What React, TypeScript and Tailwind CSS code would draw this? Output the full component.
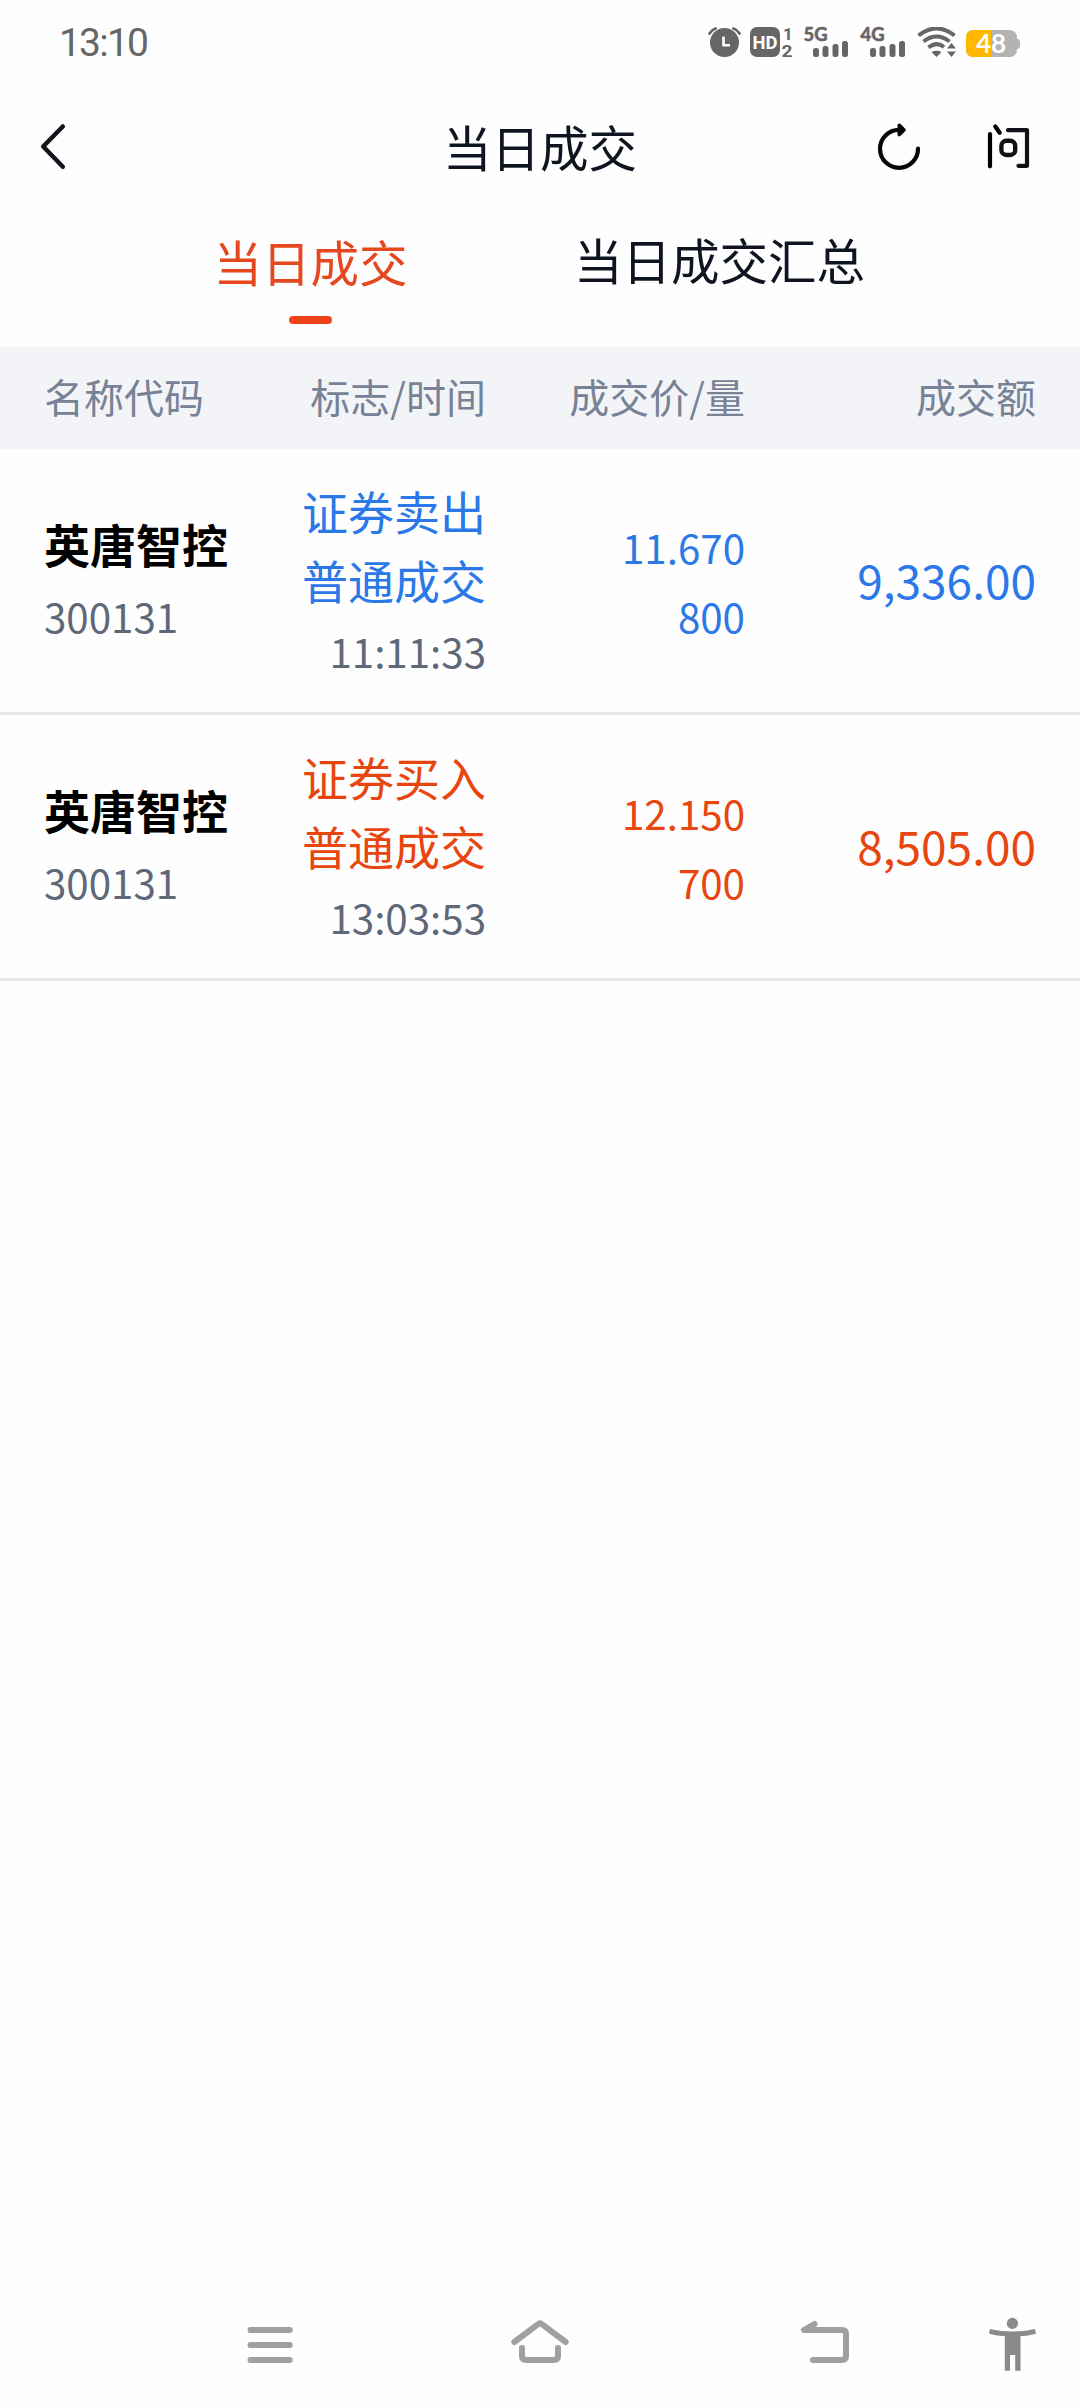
import React from "react";

type Trade = {
  name: string;
  code: string;
  action: string;
  kind: string;
  time: string;
  price: string;
  volume: string;
  amount: string;
  side: "buy" | "sell";
};

const trades: Trade[] = [
  {
    name: "英唐智控",
    code: "300131",
    action: "证券卖出",
    kind: "普通成交",
    time: "11:11:33",
    price: "11.670",
    volume: "800",
    amount: "9,336.00",
    side: "sell",
  },
  {
    name: "英唐智控",
    code: "300131",
    action: "证券买入",
    kind: "普通成交",
    time: "13:03:53",
    price: "12.150",
    volume: "700",
    amount: "8,505.00",
    side: "buy",
  },
];

const sideColor = { buy: "text-[#e8450f]", sell: "text-[#2b78e8]" };

function Signal({ label }: { label: string }) {
  return (
    <svg className="overflow-visible" width="45" height="30" viewBox="0 0 45 30" fill="#666">
      <text x="-0.5" y="14" fontSize="19.5" fontWeight="700" fontFamily="Lato" textLength="24" lengthAdjust="spacingAndGlyphs" stroke="#666" strokeWidth="0.6">
        {label}
      </text>
      <rect x="9" y="21" width="6" height="9" rx="2.5" />
      <rect x="18.5" y="19" width="6" height="11" rx="2.5" />
      <rect x="28.5" y="17" width="6" height="13" rx="2.5" />
      <rect x="38" y="14" width="6" height="16" rx="2.5" />
    </svg>
  );
}

function StatusBar() {
  return (
    <div className="flex h-[86px] items-start justify-between pr-[60px] pl-[59px] text-[#666]">
      <span className="mt-[21px] font-['Roboto',sans-serif] text-[39px] leading-[44px] tracking-[-1.800px]">13:10</span>
      <div className="mt-[27px] flex items-start">
        <svg className="mr-[9px]" width="33" height="30" viewBox="0 0 33 30" fill="none">
          <circle cx="16.5" cy="15.5" r="14.5" fill="#666" />
          <path d="M1.5 6.5Q3.5 3 7.5 1.5M31.5 6.5Q29.500 3 25.500 1.500" stroke="#666" strokeWidth="2.8" strokeLinecap="round" />
          <path d="M15.500 9.500V18.300H22" stroke="#fff" strokeWidth="2.600" />
        </svg>
        <svg className="mr-[11px] overflow-visible" width="43" height="30" viewBox="0 0 43 30" fill="#666">
          <rect width="30" height="30" rx="7" />
          <text x="2.500" y="21.500" fontSize="18.500" fontWeight="700" fill="#fff" fontFamily="Roboto" textLength="25" lengthAdjust="spacingAndGlyphs">HD</text>
          <text x="33" y="12.500" fontSize="17" fontWeight="700" fontFamily="Roboto">1</text>
          <text x="31.500" y="30" fontSize="17" fontWeight="700" fontFamily="Roboto" textLength="11" lengthAdjust="spacingAndGlyphs">2</text>
        </svg>
        <div className="mr-[12px]"><Signal label="5G" /></div>
        <div className="mr-[11px]"><Signal label="4G" /></div>
        <svg className="mr-[9px]" width="40" height="30" viewBox="0 0 40 30" fill="none" stroke="#666">
          <path d="M1.500 8.500Q19.500 -5.500 37.500 8.500" strokeWidth="4" />
          <path d="M6.500 14.500Q19.500 4.500 32.500 14.500" strokeWidth="4" />
          <path d="M11.500 20.500Q19.500 14 27 20" strokeWidth="4" />
          <path d="M14.500 25Q19.500 22.500 24.500 25L19.500 30Z" fill="#666" stroke="none" />
          <path d="M30 21.500L34.500 16L39 21.500ZM30 24.500L34.500 30L39 24.500Z" fill="#666" stroke="none" />
        </svg>
        <div className="relative mt-[3px] flex h-[27px] w-[54px] items-center">
          <div className="flex h-[27px] w-[51px] overflow-hidden rounded-[7px] bg-[#b3b3b3]">
            <div className="w-[25px] bg-[#ffb700]" />
          </div>
          <div className="h-[10px] w-[3px] rounded-r-[3px] bg-[#b3b3b3]" />
          <span className="absolute inset-y-0 left-0 w-[50px] text-center font-['Lato',sans-serif] text-[26px] leading-[27px] font-bold text-white">48</span>
        </div>
      </div>
    </div>
  );
}

function TitleBar() {
  return (
    <header className="grid h-[120px] grid-cols-3 items-center">
      <svg className="ml-[40px]" width="28" height="48" viewBox="0 0 28 48" fill="none" stroke="#11151c" strokeWidth="4.500" strokeLinecap="round" strokeLinejoin="round">
        <path d="M22.800 4.500L3.200 24.500L22.800 44.800" />
      </svg>
      <h1 className="text-center text-[48.500px] leading-[72px] text-[#0e1420]">当日成交</h1>
      <div className="flex justify-end gap-[66px] pr-[50px]">
        <svg width="44" height="50" viewBox="877 121 44 50" fill="none" stroke="#050608" strokeWidth="4.200" strokeLinecap="round" strokeLinejoin="round">
          <path d="M918 148.500A19 19 0 1 1 899 129.800" />
          <path d="M899.300 125.300L904 130L899.300 134.500Z" fill="#050608" strokeWidth="3.600" />
        </svg>
        <svg width="43" height="50" viewBox="987 121 43 50" fill="none" stroke="#0e1218" strokeWidth="4.200" strokeLinecap="round" strokeLinejoin="round">
          <path d="M990 134V166.300M995.300 126.500L999.700 132.800" stroke="#000" />
          <path d="M1008 130.200H1027V165.800H1018.500" />
          <rect x="1001.400" y="140.800" width="13.800" height="14.200" rx="5" strokeWidth="4.400" />
        </svg>
      </div>
    </header>
  );
}

function Tabs() {
  return (
    <nav className="flex h-[141px] pt-[17px] pl-[106px] text-[48.500px] leading-[72px]">
      <div className="flex w-[409px] flex-col items-center pt-[2px] text-[#e5481f]">
        <span>当日成交</span>
        <span className="mt-[19px] h-[8px] w-[43px] rounded-full bg-[#f0431c]" />
      </div>
      <div className="w-[409px] text-center text-[#0e1420]">当日成交汇总</div>
    </nav>
  );
}

function Row({ t }: { t: Trade }) {
  return (
    <div className="flex h-[266px] items-center border-b-[3px] border-[#e4e7ec] px-[44px] text-[40.300px] leading-[69px] text-[#5f6878]">
      <div className="w-[236px]">
        <div className="-mt-[3px] mb-[3px] text-[46px] font-bold text-black">{t.name}</div>
        <div>{t.code}</div>
      </div>
      <div className="w-[206px] pt-[2px] text-right">
        <div className={`-mt-[2px] text-[46px] ${sideColor[t.side]}`}>{t.action}</div>
        <div className={`mb-[2px] text-[46px] ${sideColor[t.side]}`}>{t.kind}</div>
        <div>{t.time}</div>
      </div>
      <div className={`w-[259px] text-right ${sideColor[t.side]}`}>
        <div>{t.price}</div>
        <div>{t.volume}</div>
      </div>
      <div className={`flex-1 pb-[2px] text-right text-[46px] ${sideColor[t.side]}`}>{t.amount}</div>
    </div>
  );
}

function NavBar() {
  return (
    <footer className="mt-auto flex h-[128px] items-center pl-[243px] text-[#a0a0a0]">
      <svg width="54" height="54" viewBox="243 2317 54 54" stroke="currentColor" strokeWidth="6" strokeLinecap="round">
        <path d="M250.500 2330H289.700M250.500 2345H289.700M250.500 2360H289.700" />
      </svg>
      <svg className="ml-[213px]" width="60" height="54" viewBox="510 2317 60 54" fill="none" stroke="currentColor" strokeWidth="6" strokeLinecap="round" strokeLinejoin="round">
        <path d="M514.300 2342L538.500 2323.800Q540 2322.700 541.500 2323.800L565.700 2342" />
        <path d="M522 2348V2356Q522 2360 526 2360H554Q558 2360 558 2356V2348" />
      </svg>
      <svg className="ml-[230px]" width="52" height="54" viewBox="800 2317 52 54" fill="none" stroke="currentColor" strokeWidth="6" strokeLinecap="round" strokeLinejoin="round">
        <path d="M814.500 2324L804 2330H842Q846 2330 846 2334V2356Q846 2360 842 2360H813" />
      </svg>
      <svg className="ml-[136px]" width="48" height="56" viewBox="988 2317 48 56" fill="#8a8a8a">
        <circle cx="1012.400" cy="2324.400" r="5.600" />
        <path d="M990 2330Q1012.500 2335 1035 2330L1036 2334.700Q1028 2336.700 1020.500 2337.300V2371.800H1015.200V2356H1010V2371.800H1004.800V2337.300Q997 2336.700 989 2334.700Z" />
      </svg>
    </footer>
  );
}

export default function App() {
  return (
    <div className="flex h-[2408px] w-[1080px] flex-col bg-[#fefefe] font-['Noto_Sans_CJK_SC',sans-serif]">
      <StatusBar />
      <TitleBar />
      <Tabs />
      <div className="flex h-[102px] items-center bg-[#f2f4f8] px-[44px] pb-[5px] text-[40px] leading-[60px] text-[#788296]">
        <div className="w-[236px]">名称代码</div>
        <div className="w-[206px] text-right">标志/时间</div>
        <div className="w-[259px] text-right">成交价/量</div>
        <div className="flex-1 text-right">成交额</div>
      </div>
      {trades.map((t) => (
        <Row key={t.time} t={t} />
      ))}
      <NavBar />
    </div>
  );
}
